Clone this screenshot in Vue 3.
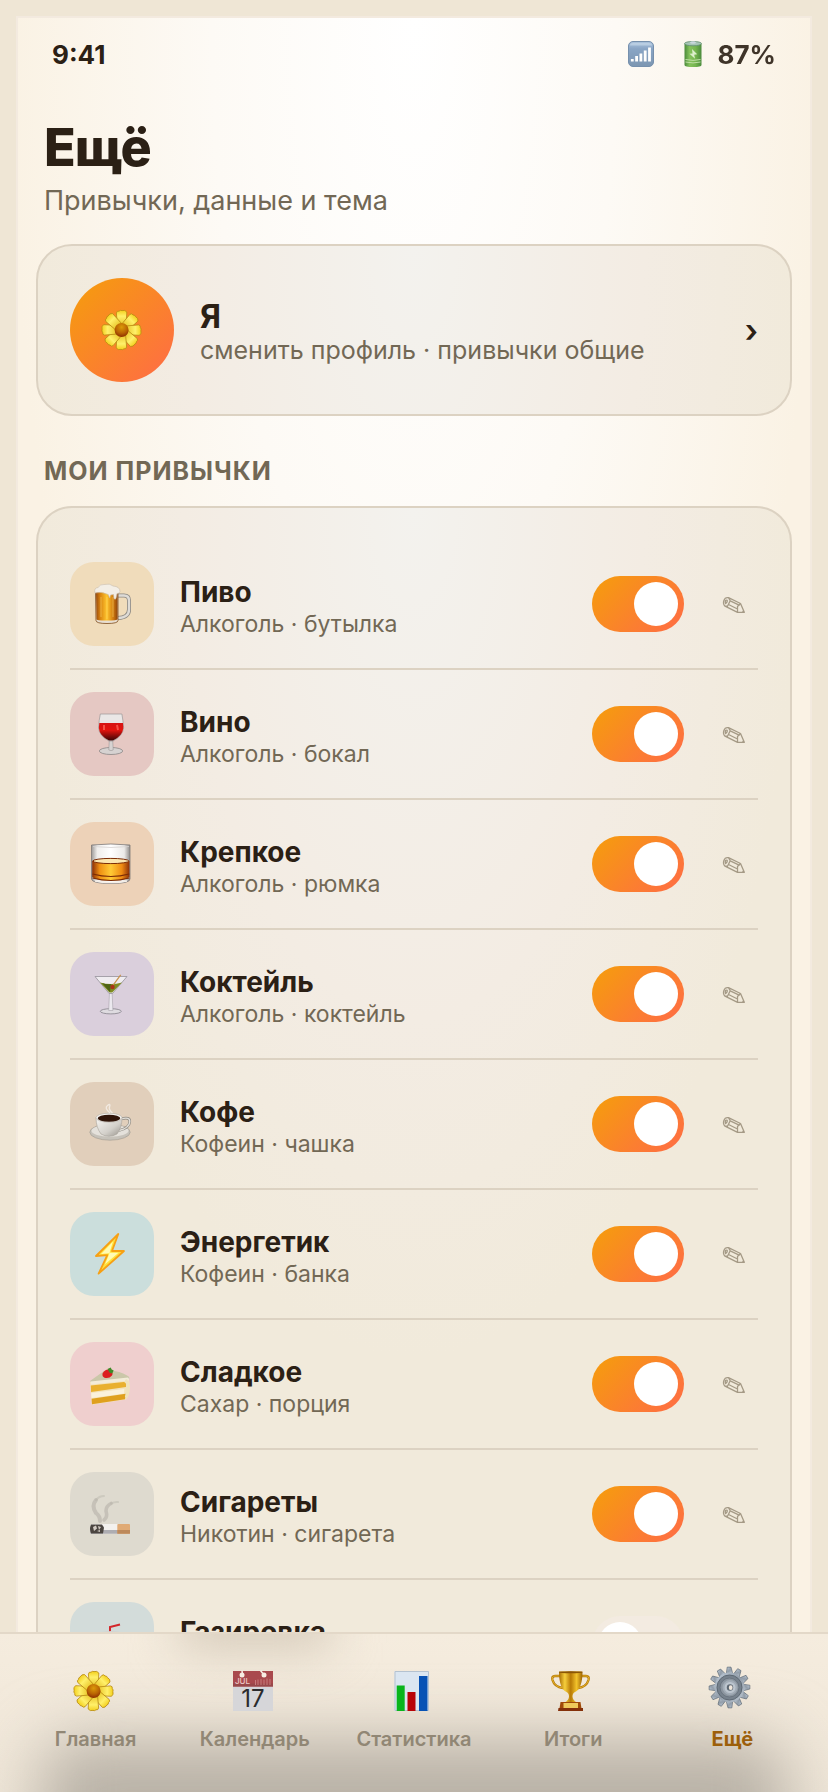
<script setup>
import { ref } from 'vue'

const habits = ref([
  { id: 'beer', name: 'Пиво', note: 'Алкоголь · бутылка', on: true },
  { id: 'wine', name: 'Вино', note: 'Алкоголь · бокал', on: true },
  { id: 'whisky', name: 'Крепкое', note: 'Алкоголь · рюмка', on: true },
  { id: 'cocktail', name: 'Коктейль', note: 'Алкоголь · коктейль', on: true },
  { id: 'coffee', name: 'Кофе', note: 'Кофеин · чашка', on: true },
  { id: 'energy', name: 'Энергетик', note: 'Кофеин · банка', on: true },
  { id: 'cake', name: 'Сладкое', note: 'Сахар · порция', on: true },
  { id: 'smoke', name: 'Сигареты', note: 'Никотин · сигарета', on: true },
  { id: 'soda', name: 'Газировка', note: 'Сахар · стакан', on: false },
])

const tabs = [
  { id: 'flower', label: 'Главная' },
  { id: 'calendar', label: 'Календарь' },
  { id: 'chart', label: 'Статистика' },
  { id: 'trophy', label: 'Итоги' },
  { id: 'gear', label: 'Ещё' },
]
const active = ref('gear')
</script>

<template>
  <svg class="sprite" aria-hidden="true">
    <defs>
      <linearGradient id="g-petal" x1="0" y1="0" x2="0" y2="1">
        <stop offset="0" stop-color="#f3cf1c" /><stop offset=".4" stop-color="#fff06a" /><stop offset="1" stop-color="#e9c52a" />
      </linearGradient>
      <radialGradient id="g-core" cx=".5" cy=".3" r=".7">
        <stop offset="0" stop-color="#dc9a08" /><stop offset=".6" stop-color="#b96303" /><stop offset="1" stop-color="#8e2f00" />
      </radialGradient>
      <linearGradient id="g-beer" x1="0" y1="0" x2="1" y2="0">
        <stop offset="0" stop-color="#9a4a0a" /><stop offset=".2" stop-color="#d98410" /><stop offset=".5" stop-color="#ffc52e" /><stop offset=".8" stop-color="#d07a10" /><stop offset="1" stop-color="#8d430a" />
      </linearGradient>
      <linearGradient id="g-wine" x1="0" y1="0" x2="0" y2="1">
        <stop offset="0" stop-color="#d51414" /><stop offset=".4" stop-color="#e4140f" /><stop offset="1" stop-color="#3c0505" />
      </linearGradient>
      <linearGradient id="g-glass" x1="0" y1="0" x2="1" y2="0">
        <stop offset="0" stop-color="#9d9a98" /><stop offset=".15" stop-color="#f0eeec" /><stop offset=".5" stop-color="#ffffff" /><stop offset=".85" stop-color="#eceae8" /><stop offset="1" stop-color="#8f8b89" />
      </linearGradient>
      <linearGradient id="g-whisky" x1="0" y1="0" x2="1" y2="0">
        <stop offset="0" stop-color="#8c2f06" /><stop offset=".2" stop-color="#ef8f12" /><stop offset=".5" stop-color="#ffca35" /><stop offset=".8" stop-color="#ef8a12" /><stop offset="1" stop-color="#8c2f06" />
      </linearGradient>
      <linearGradient id="g-cup" x1="0" y1="0" x2="1" y2="1">
        <stop offset="0" stop-color="#f7f6f3" /><stop offset=".6" stop-color="#d3d0ca" /><stop offset="1" stop-color="#95918a" />
      </linearGradient>
      <linearGradient id="g-gold" x1="0" y1="0" x2="1" y2="0">
        <stop offset="0" stop-color="#a86d05" /><stop offset=".25" stop-color="#f6cf3c" /><stop offset=".5" stop-color="#b87a06" /><stop offset=".75" stop-color="#f2c32b" /><stop offset="1" stop-color="#9c6204" />
      </linearGradient>
      <linearGradient id="g-steel" x1="0" y1="0" x2="1" y2="1">
        <stop offset="0" stop-color="#c2cedb" /><stop offset=".5" stop-color="#929da9" /><stop offset="1" stop-color="#bcc7d2" />
      </linearGradient>
      <linearGradient id="g-signal" x1="0" y1="0" x2="0" y2="1">
        <stop offset="0" stop-color="#a3bedb" /><stop offset=".3" stop-color="#7d9cc0" /><stop offset="1" stop-color="#6f8cab" />
      </linearGradient>
      <linearGradient id="g-battery" x1="0" y1="0" x2="1" y2="0">
        <stop offset="0" stop-color="#387f28" /><stop offset=".3" stop-color="#79bd4d" /><stop offset=".65" stop-color="#67ae3e" /><stop offset="1" stop-color="#38802a" />
      </linearGradient>
    </defs>

    <symbol id="i-flower" viewBox="0 0 40 40" overflow="visible">
      <g fill="url(#g-petal)" stroke="#b88a12" stroke-width=".8">
        <path id="petal" d="M15.400 15 14.400 3Q14.800 .7 17 1.200 18.500-.2 20 .6 23-.4 24.800 2L24.200 15Z" />
        <use href="#petal" transform="rotate(45 19.5 20)" />
        <use href="#petal" transform="rotate(90 19.5 20)" />
        <use href="#petal" transform="rotate(135 19.5 20)" />
        <use href="#petal" transform="rotate(180 19.5 20)" />
        <use href="#petal" transform="rotate(225 19.5 20)" />
        <use href="#petal" transform="rotate(270 19.5 20)" />
        <use href="#petal" transform="rotate(315 19.5 20)" />
      </g>
      <circle cx="19.6" cy="20" r="7" fill="url(#g-core)" />
    </symbol>

    <symbol id="i-beer" viewBox="0 0 40 40" overflow="visible">
      <path d="M26 11.5h6q5 0 5 5v9q0 8-11 8.500" fill="none" stroke="#8b8782" stroke-width="4" />
      <path d="M26 11.500h6q5 0 5 5v9q0 8-11 8.500" fill="none" stroke="#dedbd6" stroke-width="2.400" />
      <path d="M3.500 7h22.500v29.500q0 3-11 3t-11-3Z" fill="#e8dfd2" stroke="#7c4a1c" stroke-width=".8" />
      <path d="M4 8h21.600v27q0 1.500-10.800 1.500T4.500 35Z" fill="url(#g-beer)" />
      <path d="M9 13v20M15 13v22M21 13v20" stroke="#ffe27a" stroke-opacity=".45" />
      <path d="M3 9Q1.500 4 6 3.500 8 0 13 .4 18-.8 21 2q7 .5 7 5.500-1 2.500-3 2l-1 5q-1 1.500-2 0l-.5-4-3 .5-.8 3-1.500-3.500Q9 7 3 9Z" fill="#f3eee6" stroke="#c9bcab" stroke-width=".6" />
    </symbol>

    <symbol id="i-wine" viewBox="0 0 40 40" overflow="visible">
      <ellipse cx="19" cy="37" rx="11.700" ry="3.500" fill="#d6d2d1" stroke="#8a8686" stroke-width=".8" />
      <path d="M17.400 24h3.200l.6 12q-2.200 1.200-4.400 0Z" fill="#d7d3d2" stroke="#918c8c" stroke-width=".5" />
      <path d="M8.300 0h21.600Q31 6 31.600 13.500 31 22 21 27h-4Q7 22 6.600 13.500 7 6 8.300 0Z" fill="#eae7e6" stroke="#9b9796" stroke-width=".7" />
      <path d="M7.300 9h23.700l.4 5Q30.500 22 21 26.500h-4Q7.500 22 6.800 14Z" fill="url(#g-wine)" />
      <path d="M12 11v5M25 11l1 5" stroke="#ff6b5e" stroke-width="2" stroke-opacity=".7" />
    </symbol>

    <symbol id="i-whisky" viewBox="0 0 40 40" overflow="visible">
      <path d="M-.5 1Q19-1 38 1v34q0 4.500-19 4.500T-.5 35Z" fill="url(#g-glass)" stroke="#7d7977" stroke-width=".8" />
      <path d="M.2 17Q19 12 37.400 17v16q-4 3.500-18.500 3.500T.2 33Z" fill="url(#g-whisky)" />
      <ellipse cx="18.800" cy="17" rx="18" ry="2.600" fill="#fbe7b0" stroke="#7c2c06" stroke-width="1" />
      <path d="M.5 30q18.500 5 36.800 0M.5 34q18.500 5 36.800 0" fill="none" stroke="#7c2c06" stroke-width="1.200" />
      <path d="M3 37q16 3 32 0" fill="none" stroke="#f5efe8" stroke-width="1.500" />
      <path d="M1 2.500q18 2 36 0" fill="none" stroke="#d5d2d0" stroke-width=".8" />
    </symbol>

    <symbol id="i-cocktail" viewBox="0 0 40 40" overflow="visible">
      <ellipse cx="18.800" cy="37.300" rx="10.500" ry="2.600" fill="#dedbe0" stroke="#85818a" stroke-width=".8" />
      <path d="M17.500 18h2.600l.8 18.500h-4.200Z" fill="#ebe8ee" stroke="#9c98a0" stroke-width=".5" />
      <path d="M3 2.500h32L20.500 19.500h-3.400Z" fill="#f0edf1" stroke="#96929a" stroke-width=".8" />
      <path d="M8 8.500q11 3 22 0l-9.800 10h-2.800Z" fill="#7f8c22" />
      <path d="M10 9q5 2 9 1l-1 8Z" fill="#4f6316" />
      <path d="m28.700.8-8.500 11.500" stroke="#c9924a" stroke-width="1.200" />
      <circle cx="20.500" cy="13" r="2.200" fill="#a93416" />
    </symbol>

    <symbol id="i-coffee" viewBox="0 0 40 40" overflow="visible">
      <ellipse cx="18" cy="28.200" rx="20.200" ry="8" fill="#c6c2ba" stroke="#9d988e" stroke-width=".6" />
      <ellipse cx="18" cy="26.800" rx="18.500" ry="6" fill="#e4e1db" />
      <path d="M29 15q9-2.500 8.800 2.500Q37.500 24 27 26.500" fill="none" stroke="#8c8880" stroke-width="2.600" />
      <path d="M29 15q9-2.500 8.800 2.500Q37.500 24 27 26.500" fill="none" stroke="#e2dfd9" stroke-width="1.400" />
      <path d="M4 13.500q0 10 5 16.500 8 4.500 16 0 5-6.500 5-16.500Z" fill="url(#g-cup)" stroke="#a7a29a" stroke-width=".6" />
      <ellipse cx="17" cy="13.700" rx="13" ry="4.500" fill="#f6f4f0" stroke="#b0aba3" stroke-width=".6" />
      <ellipse cx="17" cy="14.200" rx="11.300" ry="3.500" fill="#301509" />
      <path d="M18 9Q12 4 15.500 1.500 19-1 17.500 3q-1 2.500 3 6" fill="none" stroke="#fff" stroke-opacity=".55" stroke-width="1.400" />
    </symbol>

    <symbol id="i-energy" viewBox="0 0 40 40" overflow="visible">
      <path d="M26.300 0 4 22l11.300-.8-8.700 18.500L32 17H20Z" fill="#ffe23c" stroke="#f7a014" stroke-width="1.800" stroke-linejoin="round" />
      <path d="m21 7.500-12 12.500 8.500-.7-4.500 11L26.500 18.700H17.500Z" fill="#fffbb5" />
    </symbol>

    <symbol id="i-cake" viewBox="0 0 40 40" overflow="visible">
      <path d="M-2 17.500 36 14q3.500 8 .5 18l-2.500 3.500L-.2 40.700Z" fill="#f3e3bb" />
      <path d="M-2 17 12 7q14-1.500 24 5 2 1 1 4L-1 18.500Z" fill="#cbc7a9" />
      <path d="m-1.500 17.500 37.500-4q1.500 1 1 3l-38 4Z" fill="#f3ecd8" />
      <path d="m-1.200 21.500 33-3.500q3 .5 2.200 5L-.9 28Z" fill="#e9b02e" />
      <path d="m-.8 29 33-4v4.500L-.5 34Z" fill="#faf1db" />
      <path d="m-.4 34.800 34.200-5L33 35.200l-33 5Z" fill="#dfa01e" />
      <path d="M34 15.500q3.500 8 0 18" fill="none" stroke="#efe2bc" stroke-width="2.400" />
      <path d="M10.500 9.500Q13 5 17 5.500q5 3 3 6-3 3.500-7.500 2.200-2.500-1-2-4.200Z" fill="#dc1d20" />
      <path d="m15.500 5 3.200-1.500 1 2 2 1-1.500 3-2.500-.8Z" fill="#3f8a28" />
    </symbol>

    <symbol id="i-smoke" viewBox="0 0 40 40" overflow="visible">
      <g fill="none" stroke="#b5b1a8" stroke-linecap="round">
        <path d="M8 27Q8 22 4 19-1 12 4 6" stroke-width="4" stroke-opacity=".6" />
        <path d="M4 6Q7 2 12 2" stroke-width="2" stroke-opacity=".4" />
        <path d="M12 26q4-3 2-9 0-5 5-7.500" stroke-width="3.600" stroke-opacity=".6" />
        <path d="M19 9.500q4-2 7-1.500" stroke-width="2" stroke-opacity=".4" />
      </g>
      <rect x="-1.500" y="30" width="28" height="9.700" rx="1.500" fill="#f3f1ee" />
      <rect x="-1.500" y="36" width="28" height="3.700" rx="1" fill="#aeadb2" />
      <rect x="25.300" y="30" width="12.700" height="9.700" rx="1" fill="#e0aa75" />
      <path d="M25.300 36h12.700v3.700h-12.700Z" fill="#bd895b" />
      <path d="M-1 30.500h11l2 3-1 6H-1q-2-4.500 0-9Z" fill="#4b4540" />
      <path d="m1 33 3-1.500 1 3-3 2.500Zm5-1 3 1-2 3Zm-1 5 3-1v2Z" fill="#d2cbc3" />
    </symbol>

    <symbol id="i-soda" viewBox="0 0 40 40" overflow="visible">
      <path d="M28 .5 18 3V12" fill="none" stroke="#d3262b" stroke-width="2" />
      <path d="M7 8.500q12-3 24 0l1 4H6Z" fill="#d4d3d2" />
      <path d="M8 12.500h22l-3 27H11Z" fill="#cf2b2b" />
    </symbol>

    <symbol id="i-calendar" viewBox="0 0 40 40" overflow="visible">
      <path d="M0 0h40v40H0Z" fill="#d6d6d9" />
      <path d="M0 0h40v15.500H0Z" fill="#a9494d" />
      <path d="M0 12.500h40v3H0Z" fill="#98484a" />
      <circle cx="9" cy="4" r="2.500" fill="#f7ece2" /><circle cx="31" cy="4" r="2.500" fill="#f7ece2" />
      <path d="m9-.5.500 4M27.500-.5 31 4" stroke="#f7ece2" stroke-width="1.500" />
      <path d="M22.500 9v5M25 8.500V14M28 8v6M31 8.500V14M34 7.500V14M37 8v6" stroke="#c67c7d" />
    </symbol>

    <symbol id="i-chart" viewBox="0 0 40 40" overflow="visible">
      <path d="M2.500 0h34.500v40H2.500Z" fill="#dbe6f1" />
      <path d="M3 .5h33.500v39H3Z" fill="none" stroke="#b4c2d0" />
      <path d="M4.700 14.500h8V40h-8Z" fill="#09b51c" />
      <path d="M15.500 21h8v19h-8Z" fill="#b90307" />
      <path d="M27 5h8.500V40H27Z" fill="#0752b5" />
    </symbol>

    <symbol id="i-trophy" viewBox="0 0 40 40" overflow="visible">
      <path d="M9 5H4Q.5 5 1.500 9q2 7 10.500 8M30 5h5q3.500 0 2.500 4-2 7-10.500 8" fill="none" stroke="#b77906" stroke-width="2.400" />
      <path d="M9 5H4Q.5 5 1.500 9q2 7 10.500 8M30 5h5q3.500 0 2.500 4-2 7-10.500 8" fill="none" stroke="#ecc236" stroke-width=".8" />
      <path d="M8 .5h23.500q0 17-7.500 20.500-2.500 1-2.500 4.500t5 6.500H13q5-3 5-6.500t-2.500-4.500Q8 17.500 8 .5Z" fill="url(#g-gold)" />
      <ellipse cx="19.700" cy="1.200" rx="11.800" ry="1" fill="#8a5505" />
      <path d="M9.500 31h20l1 6.500h-22Z" fill="#a04a08" />
      <path d="M12.500 32h14.500v5H12.500Z" fill="#efc95a" />
      <path d="M7.500 37h24.500v3H7Z" fill="#84300a" />
    </symbol>

    <symbol id="i-gear" viewBox="0 0 40 40" overflow="visible">
      <g transform="translate(19.500 16.500)">
        <g fill="url(#g-steel)" stroke="#56616d" stroke-width=".6">
          <path id="tooth" d="m-3.200-14 .9-6.400h3.800l1.700 6.400Z" />
          <use href="#tooth" transform="rotate(30)" /><use href="#tooth" transform="rotate(60)" />
          <use href="#tooth" transform="rotate(90)" /><use href="#tooth" transform="rotate(120)" />
          <use href="#tooth" transform="rotate(150)" /><use href="#tooth" transform="rotate(180)" />
          <use href="#tooth" transform="rotate(210)" /><use href="#tooth" transform="rotate(240)" />
          <use href="#tooth" transform="rotate(270)" /><use href="#tooth" transform="rotate(300)" />
          <use href="#tooth" transform="rotate(330)" />
        </g>
        <circle r="15" fill="url(#g-steel)" />
        <circle r="12.500" fill="#77828d" stroke="#5e6974" />
        <circle r="9.500" fill="#8b959f" stroke="#6b7580" />
        <circle cx=".5" r="6.500" fill="#bcc5ce" stroke="#a2acb6" stroke-width="2" />
        <circle cx=".5" r="3.200" fill="#5e6872" />
        <ellipse cx="1.200" cy=".2" rx="1.900" ry="2.400" fill="#efe7dc" />
      </g>
    </symbol>
  </svg>

  <div class="screen">
    <div class="phone">
      <header class="status">
        <span>9:41</span>
        <span class="status-right">
          <svg class="signal" viewBox="0 0 26 26" role="img" aria-label="Сигнал">
            <rect x=".5" y=".5" width="25" height="25" rx="4.500" fill="url(#g-signal)" stroke="#6885a6" />
            <path d="M2 4.500Q2 2 5 2h16q3 0 3 2.500Z" fill="#c5d8eb" fill-opacity=".6" />
            <path d="M4.300 18v2.500M8.600 15v5.500M12.900 12.500v8M17.200 9.500v11M21.500 6.500v14" stroke="#fff" stroke-width="2.800" />
          </svg>
          <svg class="battery" viewBox="0 0 18 26" role="img" aria-label="Батарея">
            <path d="M.5 2.500h17V24q0 2-8.500 2T.5 24Z" fill="url(#g-battery)" />
            <ellipse cx="9" cy="2.600" rx="8.500" ry="2.200" fill="#9ec0b0" stroke="#4f8161" stroke-width=".8" />
            <ellipse cx="9" cy="1.500" rx="3" ry="1.200" fill="#c4d4dc" />
            <path d="m8 8 .5 4.500-3 .3 5.500 5-.8-4 3-.5Z" fill="#d9efc8" />
            <path d="M1.500 18.500q7.500 1.800 15 0M1.500 21q7.500 1.800 15 0" fill="none" stroke="#b9dd9d" />
          </svg>
          <span>87%</span>
        </span>
      </header>

      <main>
        <h1>Ещё</h1>
        <p class="lead">Привычки, данные и тема</p>

        <button class="card profile" type="button">
          <span class="avatar"><svg class="emoji"><use href="#i-flower" /></svg></span>
          <span class="who">
            <strong>Я</strong>
            <span>сменить профиль · привычки общие</span>
          </span>
          <span class="chevron">›</span>
        </button>

        <h2>Мои привычки</h2>
        <ul class="card list">
          <li v-for="h in habits" :key="h.id">
            <span class="tile" :class="h.id"><svg class="emoji"><use :href="'#i-' + h.id" /></svg></span>
            <label class="info" :for="'sw-' + h.id">
              <strong>{{ h.name }}</strong>
              <span>{{ h.note }}</span>
            </label>
            <input :id="'sw-' + h.id" v-model="h.on" class="switch" type="checkbox" role="switch" />
            <button class="edit" type="button" :aria-label="'Изменить: ' + h.name">
              <svg viewBox="0 0 22 16">
                <path d="M5.500.7 17.500 6.500 21.300 15.300H14.500L2 9.200Q-.3 7 .9 3.500T5.500.7Z M17.500 6.500 14.500 9.500V15.300 M5.500.7 7.200 3.800 4.500 9.200 2 9.200 M7.200 3.800l9.500 4.500M5.500 7.500l9 4.500 M2.500 3.500q2-1 1.800.8t-1.800 2.200Z M19.500 14l1.300.8" />
              </svg>
            </button>
          </li>
        </ul>
      </main>
    </div>

    <nav>
      <button v-for="t in tabs" :key="t.id" type="button" :class="{ active: t.id === active }" @click="active = t.id">
        <svg class="tab-icon" viewBox="0 0 44 40">
          <use :href="'#i-' + t.id" width="40" height="40" />
          <template v-if="t.id === 'calendar'">
            <text x="2" y="13" class="cal-month">JUL</text>
            <text x="20" y="36" class="cal-day">17</text>
          </template>
        </svg>
        <span>{{ t.label }}</span>
      </button>
    </nav>
  </div>
</template>

<style>
html, body { margin: 0; background: #efe6d5; }
</style>

<style scoped>
.sprite { position: absolute; width: 0; height: 0; }
.screen {
  position: relative;
  height: 100vh;
  overflow: hidden;
  background: #efe6d5;
  color: #2b2015;
  font-family: Inter, Roboto, "Liberation Sans", sans-serif;
}
.phone {
  box-sizing: border-box;
  margin: 16px 16px 0;
  min-height: 100vh;
  border: 2px solid #f3eadf;
  padding: 0 18px;
  background: radial-gradient(ellipse 51% 1250px at 50% 0, #ffffff 0%, #fdfaf5 50%, #faf2e4 100%);
}
.status {
  display: flex;
  justify-content: space-between;
  align-items: center;
  height: 72px;
  padding: 0 16px;
  font-size: 26px;
  font-weight: 700;
}
.status-right { display: flex; align-items: center; opacity: .9; }
.signal { width: 26px; height: 26px; margin-right: 30px; }
.battery { width: 18px; height: 26px; margin-right: 16px; }
h1 {
  margin: 26px 8px 0;
  font-size: 52px;
  line-height: 64px;
  font-weight: 800;
  letter-spacing: -1px;
}
.lead { margin: 5px 8px 27px; font-size: 27px; line-height: 32px; color: #726855; }
button { font: inherit; color: inherit; border: 0; background: none; padding: 0; }
.card {
  box-sizing: border-box;
  width: 100%;
  padding: 32px;
  border: 2px solid #dcd2c2;
  border-radius: 36px;
  background: radial-gradient(ellipse 51% 850px at 50% 0, #f3f2ee 0%, #f3ece3 60%, #f1eadb 100%);
}
.profile { display: flex; align-items: center; gap: 26px; text-align: left; }
.avatar {
  display: grid;
  place-items: center;
  width: 104px;
  height: 104px;
  border-radius: 50%;
  background: linear-gradient(135deg, #f59e0b, #ff6b47);
}
.emoji { width: 40px; height: 40px; overflow: visible; }
.who { flex: 1; display: flex; flex-direction: column; padding-top: 6px; font-size: 25px; line-height: 32px; color: #726855; }
.who strong { font-size: 32px; line-height: 34px; color: #2b2015; }
.chevron { font-size: 32px; font-weight: 600; }
h2 {
  margin: 40px 8px 20px;
  font-size: 25px;
  line-height: 30px;
  font-weight: 700;
  letter-spacing: 1px;
  text-transform: uppercase;
  color: #726855;
}
.list { margin: 0; list-style: none; }
li { display: flex; align-items: center; gap: 26px; padding: 22px 0; border-bottom: 2px solid #dcd2c2; }
li:last-child { border-bottom: 0; }
.tile { display: grid; place-items: center; width: 84px; height: 84px; border-radius: 24px; }
.beer { background: #f0dcbb; }
.wine { background: #e5c8c3; }
.whisky { background: #edd2b8; }
.cocktail { background: #dacfdc; }
.coffee { background: #e1cfbb; }
.energy { background: #cbdedc; }
.cake { background: #efcfce; }
.smoke { background: #dedacf; }
.soda { background: #d3dcda; }
.info { flex: 1; display: flex; flex-direction: column; padding-top: 6px; font-size: 23px; line-height: 30px; color: #726855; }
.info strong { font-size: 28px; line-height: 34px; color: #2b2015; }
.switch {
  appearance: none;
  box-sizing: border-box;
  display: flex;
  width: 92px;
  height: 56px;
  margin: 0;
  padding: 6px;
  border-radius: 28px;
  background: #f3ebe1;
}
.switch::before { content: ""; width: 44px; height: 44px; border-radius: 50%; background: #fff; }
.switch:checked { justify-content: flex-end; background: linear-gradient(135deg, #f59e0b, #ff6b47); }
.edit { display: grid; place-items: center; width: 48px; height: 48px; padding-top: 2px; }
.edit svg { width: 22px; height: 16px; overflow: visible; fill: none; stroke: #a59a86; stroke-width: 1.3; stroke-linejoin: round; }
nav {
  position: absolute;
  inset: auto 0 0;
  box-sizing: border-box;
  display: grid;
  grid-template-columns: repeat(5, 1fr);
  height: 160px;
  padding: 37px 16px 0;
  border-top: 2px solid #e3d8c8;
  overflow: hidden;
  background: linear-gradient(#f5ecde, #efe6d8);
}
nav::before {
  content: "";
  position: absolute;
  inset: 106px 40px -100px;
  border-radius: 36px;
  background: #b9b2a7;
  filter: blur(32px);
}
nav::after {
  content: "";
  position: absolute;
  top: -28px;
  left: 180px;
  width: 150px;
  height: 40px;
  background: #cfc4b3;
  filter: blur(24px);
}
nav button {
  position: relative;
  z-index: 1;
  display: flex;
  flex-direction: column;
  align-items: center;
  gap: 16px;
  font-size: 20px;
  line-height: 24px;
  font-weight: 600;
  color: #918775;
}
nav .active { color: #9c5f0a; font-weight: 700; }
.tab-icon { width: 44px; height: 40px; overflow: visible; }
.cal-month { font: 500 8px Inter, sans-serif; fill: #ecc9c6; }
.cal-day { font: 400 24px Inter, sans-serif; fill: #2b2b2d; text-anchor: middle; }
</style>
